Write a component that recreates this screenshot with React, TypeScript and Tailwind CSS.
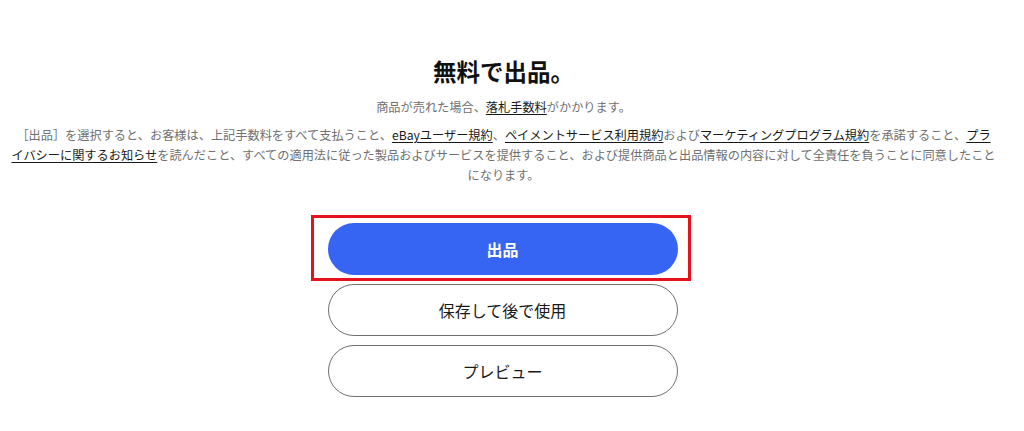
import React from 'react';

const font = { fontFamily: '"Noto Sans CJK JP", "Noto Sans", sans-serif' };

function Link({ children }: { children: React.ReactNode }) {
  return <a className="text-[#191919] underline underline-offset-2 decoration-[#191919]">{children}</a>;
}

export default function App() {
  return (
    <div className="w-[1007px] h-[431px] bg-white flex flex-col items-center pt-[56px]" style={font}>
      <h1 className="text-[23.5px] leading-[30px] font-bold text-[#111]">無料で出品。</h1>
      <p className="mt-[11px] text-[12.2px] leading-[20px] text-[#707070]">
        商品が売れた場合、<Link>落札手数料</Link>がかかります。
      </p>
      <p className="mt-[8px] text-[12.2px] leading-[20px] text-[#707070] text-center whitespace-nowrap">
        ［出品］を選択すると、お客様は、上記手数料をすべて支払うこと、<Link>eBayユーザー規約</Link>、
        <Link>ペイメントサービス利用規約</Link>および<Link>マーケティングプログラム規約</Link>を承諾すること、<Link>プラ</Link>
        <br />
        <Link>イバシーに関するお知らせ</Link>を読んだこと、すべての適用法に従った製品およびサービスを提供すること、および提供商品と出品情報の内容に対して全責任を負うことに同意したこと
        <br />
        になります。
      </p>

      <div className="mt-[38px] flex flex-col gap-[9px] w-[350px] -translate-x-px">
        <div className="relative">
          <button className="w-full h-[52px] rounded-full bg-[#3665f3] text-white text-[16px] font-bold">
            出品
          </button>
          <div className="absolute -left-[17px] -top-[8px] -right-[13px] -bottom-[6px] border-[3px] border-[#e5121d] pointer-events-none" />
        </div>
        <button className="w-full h-[52px] rounded-full border border-[#707070] bg-white text-[#191919] text-[16px]">
          保存して後で使用
        </button>
        <button className="w-full h-[52px] rounded-full border border-[#707070] bg-white text-[#191919] text-[16px]">
          プレビュー
        </button>
      </div>
    </div>
  );
}
